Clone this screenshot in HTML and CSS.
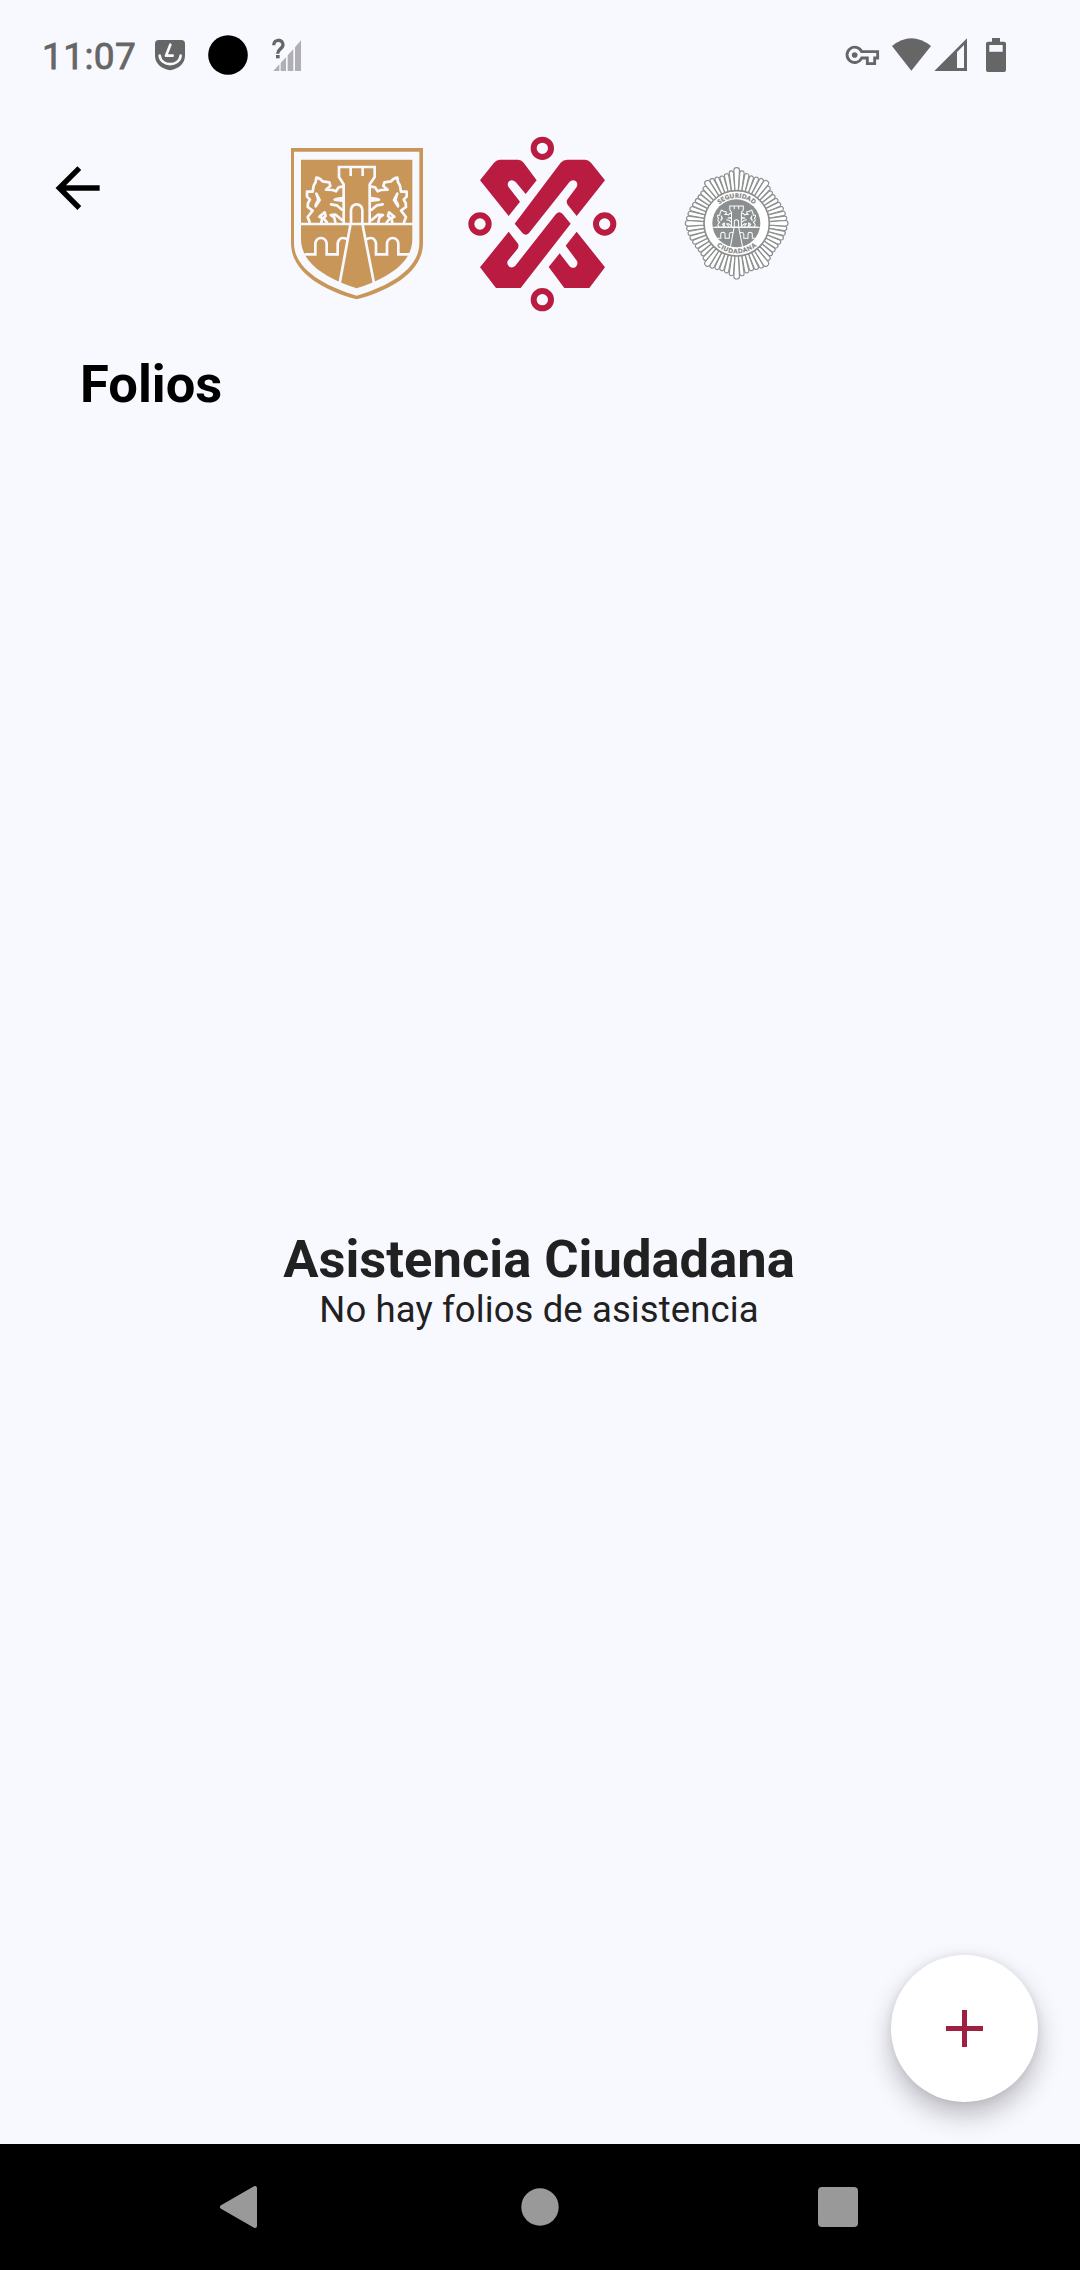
FILE: index.html
```html
<!DOCTYPE html>
<html lang="es">
<head>
<meta charset="utf-8">
<title>Folios</title>
<link rel="stylesheet" href="styles.css">
</head>
<body>
<div class="screen">
  <div class="status">
    <div class="status-group">
      <span class="clock">11:07</span>
      <svg class="icon-guard" viewBox="372 0 96 210">
        <path fill="#666" d="M386 60H454Q465 60 465 71V108Q463 142 420 151Q377 142 375 108V71Q375 60 386 60Z"/>
        <path fill="none" stroke="#f8f9ff" stroke-width="8" stroke-linecap="round" stroke-linejoin="round" d="M421 74L408 107H428M389 107C393 141 448 141 452 107"/>
      </svg>
      <svg class="icon-dot" viewBox="531 0 126 210"><circle cx="594" cy="105" r="59.5"/></svg>
      <svg class="icon-nosignal" viewBox="723 0 93 210">
        <path fill="#b0afb5" d="M730 153L748 133V153ZM752 129L768 112V153H752ZM773 106L790 88V153H773ZM795 82L813 61V153H795Z"/>
        <path fill="none" stroke="#666" stroke-width="10" d="M731 76C731 56 760 56 759 75C758 87 743 87 743 101"/>
        <path fill="#666" d="M738 105h11v10h-11z"/>
      </svg>
    </div>
    <div class="status-group">
      <svg class="icon-key" viewBox="45 0 105 210">
        <path fill="none" stroke="#666" stroke-width="8.5" d="M95 95H143V114H134V131H112V114H95A23 23 0 1 1 95 95Z"/>
        <circle cx="74" cy="105" r="8.5" fill="#666"/>
      </svg>
      <svg class="icon-wifi" viewBox="183 0 123 210"><path fill="#666" d="M186 78Q244 32 303 78L244 152Z"/></svg>
      <svg class="icon-signal" viewBox="312 0 102 210"><path fill="#666" fill-rule="evenodd" d="M313 153L411 55V153ZM381 96V144H402V75Z"/></svg>
      <svg class="icon-battery" viewBox="465 0 66 210"><path fill="#666" fill-rule="evenodd" d="M486 54H510V65H522Q528 65 528 71V150Q528 156 522 156H474Q468 156 468 150V71Q468 65 474 65H486ZM478 75V95H518V75Z"/></svg>
    </div>
  </div>

  <header class="header">
    <svg class="back" viewBox="75 0 140 540"><path fill="none" stroke="#000" stroke-width="16" d="M209 174H90M148 114L88 174L148 234"/></svg>
    <svg class="logo-shield" viewBox="0 0 450 540">
      <defs>
        <g id="lion" fill="none" stroke-linejoin="round" stroke-linecap="round">
          <path d="M89 277L83 261L98 242L83 231L84 219L90 209L81 200V185H98L101 167L107 156L109 143Q118 143 128 154L148 157L151 168L138 179L158 180L168 184L176 172L187 170"/>
          <path d="M109 191L119 210L107 229M169 207L187 204M153 223L170 226L186 239M164 209L187 212M110 193L115 210L107 225"/>
          <path d="M124 277L127 264L118 260L134 247L137 258L130 264L141 277M166 277L163 263L152 255L167 254L186 270"/>
        </g>
        <g id="arches" fill="none">
          <path d="M74 373H106V341A17 17 0 0 1 140 341V373H173V341Q176 323 190 324Q197 324 204 330"/>
        </g>
        <g id="castle">
          <use href="#lion"/>
          <use href="#arches"/>
          <use href="#lion" transform="translate(461 0) scale(-1 1)"/>
          <use href="#arches" transform="translate(461 0) scale(-1 1)"/>
          <g fill="none">
            <path d="M191 280V163L177 141V111H284V141L269 163V280M212 112V138M248 112V138M213 280V240A17 17 0 0 1 247 240V280"/>
            <path d="M62 282H398M211 286L179 460M248 286L282 460"/>
          </g>
        </g>
      </defs>
      <path fill="#c99659" d="M33 54H429V340C429 430 320 485 230 508C140 485 33 430 33 340Z"/>
      <path fill="#f8f9ff" d="M42 65H418V340C418 422 315 472 230 497C145 472 42 422 42 340Z"/>
      <path fill="#c99659" d="M63 89H397V327C397 408 305 450 230 475C155 450 63 408 63 327Z"/>
      <use href="#castle" stroke="#f8f9ff" stroke-width="8"/>
    </svg>
    <svg class="logo-city" viewBox="0 0 495 540">
      <g fill="#b91c40">
        <path d="M60 151L102 98Q110 89 120 89H174Q184 89 191 98L230 151L197 192L167 156Q157 147 148 153Q140 160 145 170L180 215L146 258Z"/>
        <path d="M164 281L302 98Q310 89 322 89H375Q385 89 393 98L435 151L350 258L323 224Q317 215 323 207L350 171Q355 161 347 153Q337 147 329 155L207 309Q198 319 188 310Z"/>
        <path d="M332 281L308 252Q298 242 288 252L166 407Q158 415 149 411Q139 405 143 393L173 356Q178 348 173 340L146 305L60 412L108 474H182Z"/>
        <path d="M435 412L350 305L317 347L351 393Q355 404 347 411Q337 417 329 409L299 370L266 411L313 474H388Z"/>
      </g>
      <g fill="none" stroke="#b91c40" stroke-width="18">
        <circle cx="247" cy="55" r="26"/><circle cx="60" cy="282" r="26"/><circle cx="434" cy="282" r="26"/><circle cx="247" cy="509" r="26"/>
      </g>
    </svg>
    <svg class="logo-police" viewBox="0 0 375 465">
      <g id="rays"></g>
      <circle cx="185" cy="205" r="98" fill="#fff" stroke="#8b8f8f" stroke-width="5"/>
      <circle cx="184" cy="205" r="72" fill="#8b8f8f"/>
      <clipPath id="disc"><circle cx="184" cy="205" r="72"/></clipPath>
      <g clip-path="url(#disc)">
        <path d="M108 217H262" stroke="#fff" stroke-width="3"/>
        <use href="#castle" transform="translate(97 112) scale(.38 .37)" stroke="#fff" stroke-width="8"/>
      </g>
      <path id="arcTop" fill="none" d="M108 205A77 77 0 0 1 262 205"/>
      <path id="arcBottom" fill="none" d="M95 205A90 90 0 0 0 275 205"/>
      <text class="seal"><textPath href="#arcTop" startOffset="50%" textLength="113">SEGURIDAD</textPath></text>
      <text class="seal"><textPath href="#arcBottom" startOffset="50%" textLength="130">CIUDADANA</textPath></text>
    </svg>
  </header>

  <h1 class="title">Folios</h1>

  <main class="empty">
    <h2 class="empty-title">Asistencia Ciudadana</h2>
    <p class="empty-text">No hay folios de asistencia</p>
  </main>

  <button class="fab" aria-label="Agregar"><svg class="plus" viewBox="0 0 37 37"><path fill="none" stroke="#a02041" stroke-width="5" d="M18.5 0V37M0 18.5H37"/></svg></button>

  <nav class="nav">
    <svg class="nav-icon" viewBox="0 0 60 60"><path fill="#999" stroke="#999" stroke-width="4" stroke-linejoin="round" d="M12 30L45 11V49Z"/></svg>
    <svg class="nav-icon" viewBox="0 0 60 60"><circle cx="31" cy="30" r="18.7" fill="#999"/></svg>
    <svg class="nav-icon" viewBox="0 0 60 60"><rect x="10" y="10" width="40" height="40" rx="4" fill="#999"/></svg>
  </nav>
</div>
<script src="rays.js"></script>
</body>
</html>
```
FILE: styles.css
```css
* { box-sizing: border-box; }
body { margin: 0; font-family: Roboto, sans-serif; }
.screen {
  position: relative;
  display: flex;
  flex-direction: column;
  width: 1080px;
  height: 2270px;
  background: #f8f9ff;
  overflow: hidden;
}
svg { display: block; flex: none; }
.status {
  display: flex;
  justify-content: space-between;
  height: 130px;
  padding: 20px 73px 0 42px;
}
.status-group { display: flex; height: 70px; }
.clock {
  width: 112px;
  font-size: 37px;
  line-height: 73px;
  letter-spacing: 0.4px;
  font-weight: 400;
  -webkit-text-stroke: 0.8px #666;
  color: #666;
  white-space: nowrap;
}
.status svg { height: 70px; }
.icon-guard { width: 32px; }
.icon-dot { width: 42px; margin-left: 21px; }
.icon-nosignal { width: 31px; margin-left: 22px; }
.icon-key { width: 35px; margin-right: 11px; }
.icon-wifi { width: 41px; margin-right: 2px; }
.icon-signal { width: 34px; margin-right: 17px; }
.icon-battery { width: 22px; }
.header { display: flex; height: 180px; padding-left: 55px; }
.back { width: 46.67px; height: 180px; }
.logo-shield { width: 150px; height: 180px; margin-left: 178.33px; }
.logo-city { width: 165px; height: 180px; margin-left: 30px; overflow: visible; }
.logo-police { width: 125px; height: 155px; margin: 25px 0 0 50px; }
.seal {
  font: 900 18px Lato, sans-serif;
  fill: #7d8181;
  stroke: #7d8181;
  stroke-width: 0.8px;
  text-anchor: middle;
}
.title {
  margin: 44px 0 0 80px;
  font-size: 52.5px;
  line-height: 61px;
  font-weight: 700;
  color: #000;
}
.empty {
  flex: 1;
  display: flex;
  flex-direction: column;
  align-items: center;
  padding: 814px 2px 0 0;
  color: #212121;
}
.empty-title { margin: 0; font-size: 52.5px; line-height: 61px; font-weight: 700; white-space: nowrap; }
.empty-text { margin: 0; font-size: 36.5px; line-height: 39px; letter-spacing: 0.1px; white-space: nowrap; }
.fab {
  position: absolute;
  right: 42px;
  bottom: 168px;
  width: 147px;
  height: 147px;
  padding: 0;
  border: 0;
  border-radius: 50%;
  display: grid;
  place-items: center;
  background: #fff;
  box-shadow: 0 13px 26px rgba(30, 20, 30, .28), 0 0 9px rgba(30, 20, 30, .08);
}
.plus { width: 37px; height: 37px; }
.nav {
  display: flex;
  justify-content: space-between;
  height: 126px;
  padding: 33px 212px 0 210px;
  background: #000;
}
.nav-icon { width: 60px; height: 60px; }
```
FILE: rays.js
```js
// Rays of the police star: tip radius per 6 degree step, mirrored in each quadrant.
const tips = [167, 158, 152, 149, 151, 154, 157, 147, 142, 141, 142, 144, 147, 149, 151, 154];
const rays = [];
for (let i = 0; i < 60; i++) {
  const k = i % 30;
  const q = k > 15 ? 30 - k : k;
  const main = q === 0 || q === 15 || q === 6;
  rays.push({ angle: i * 6, tip: tips[q], width: main ? 17 : 13, main });
}
rays.sort((a, b) => a.main - b.main);
document.getElementById('rays').innerHTML = rays.map(({ angle, tip, width }) => {
  const y = 205 - tip;
  const w = width / 2;
  const d = `M180 108L${185 - w} ${y + w}A${w} ${w} 0 0 1 ${185 + w} ${y + w}L190 108Z`;
  return `<path d="${d}" transform="rotate(${angle} 185 205)" fill="#fff" stroke="#8b8f8f" stroke-width="3.6"/>`;
}).join('');
```
